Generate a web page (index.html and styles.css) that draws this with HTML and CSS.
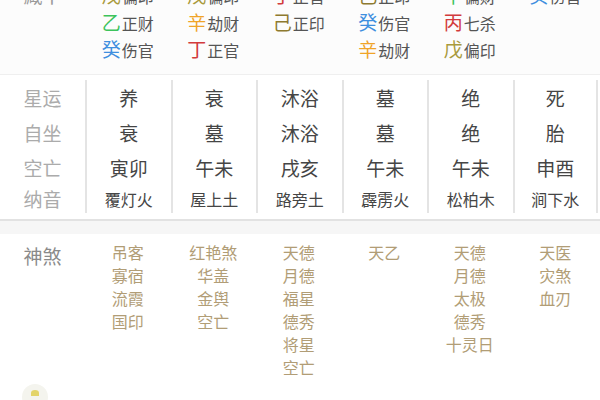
FILE: index.html
```html
<!DOCTYPE html>
<html lang="zh">
<head>
<meta charset="utf-8">
<link rel="stylesheet" href="styles.css">
</head>
<body>
<div class="page">
  <section class="hidden-stems">
    <div class="label">藏干</div>
    <div class="hs-col">
      <div class="hs"><span class="stem earth1">戊</span>偏印</div>
      <div class="hs"><span class="stem wood">乙</span>正财</div>
      <div class="hs"><span class="stem water">癸</span>伤官</div>
    </div>
    <div class="hs-col">
      <div class="hs"><span class="stem earth1">戊</span>偏印</div>
      <div class="hs"><span class="stem metal">辛</span>劫财</div>
      <div class="hs"><span class="stem fire">丁</span>正官</div>
    </div>
    <div class="hs-col">
      <div class="hs"><span class="stem fire">丁</span>正官</div>
      <div class="hs"><span class="stem earth2">己</span>正印</div>
    </div>
    <div class="hs-col">
      <div class="hs"><span class="stem earth2">己</span>正印</div>
      <div class="hs"><span class="stem water">癸</span>伤官</div>
      <div class="hs"><span class="stem metal">辛</span>劫财</div>
    </div>
    <div class="hs-col">
      <div class="hs"><span class="stem wood">甲</span>偏财</div>
      <div class="hs"><span class="stem fire">丙</span>七杀</div>
      <div class="hs"><span class="stem earth1">戊</span>偏印</div>
    </div>
    <div class="hs-col">
      <div class="hs"><span class="stem water">癸</span>伤官</div>
    </div>
  </section>

  <section class="stages">
    <div class="st-col labels">
      <div class="cell">星运</div>
      <div class="cell">自坐</div>
      <div class="cell">空亡</div>
      <div class="cell small">纳音</div>
    </div>
    <div class="st-col">
      <div class="cell">养</div><div class="cell">衰</div><div class="cell">寅卯</div><div class="cell small">覆灯火</div>
    </div>
    <div class="st-col">
      <div class="cell">衰</div><div class="cell">墓</div><div class="cell">午未</div><div class="cell small">屋上土</div>
    </div>
    <div class="st-col">
      <div class="cell">沐浴</div><div class="cell">沐浴</div><div class="cell">戌亥</div><div class="cell small">路旁土</div>
    </div>
    <div class="st-col">
      <div class="cell">墓</div><div class="cell">墓</div><div class="cell">午未</div><div class="cell small">霹雳火</div>
    </div>
    <div class="st-col">
      <div class="cell">绝</div><div class="cell">绝</div><div class="cell">午未</div><div class="cell small">松柏木</div>
    </div>
    <div class="st-col last">
      <div class="cell">死</div><div class="cell">胎</div><div class="cell">申酉</div><div class="cell small">涧下水</div>
    </div>
  </section>

  <div class="band"></div>

  <section class="shensha">
    <div class="ss-label">神煞</div>
    <div class="ss-col"><div>吊客</div><div>寡宿</div><div>流霞</div><div>国印</div></div>
    <div class="ss-col"><div>红艳煞</div><div>华盖</div><div>金舆</div><div>空亡</div></div>
    <div class="ss-col"><div>天德</div><div>月德</div><div>福星</div><div>德秀</div><div>将星</div><div>空亡</div></div>
    <div class="ss-col"><div>天乙</div></div>
    <div class="ss-col"><div>天德</div><div>月德</div><div>太极</div><div>德秀</div><div>十灵日</div></div>
    <div class="ss-col"><div>天医</div><div>灾煞</div><div>血刃</div></div>
  </section>

  <div class="footer">
    <div class="avatar"><span class="dot"></span></div>
  </div>
</div>
</body>
</html>
```

FILE: styles.css
```css
* { box-sizing: border-box; }
html, body {
  margin: 0;
  padding: 0;
  background: #ffffff;
}
body {
  font-family: "Noto Sans CJK SC", "Noto Sans", sans-serif;
  width: 600px;
  height: 400px;
  overflow: hidden;
}
.page {
  width: 600px;
}

/* ---------- hidden stems ---------- */
.hidden-stems {
  display: grid;
  grid-template-columns: 85px repeat(6, 85.5px);
  margin-top: -19px;
  padding-bottom: 12px;
  background: #fcfcfc;
  border-bottom: 1px solid #efefef;
  height: 94px;
}
.hidden-stems .label {
  color: #9a9a9a;
  font-size: 19px;
  line-height: 27px;
  text-align: center;
}
.hs-col {
  display: flex;
  flex-direction: column;
  align-items: center;
}
.hs {
  font-size: 16px;
  line-height: 27px;
  height: 27px;
  color: #555555;
  white-space: nowrap;
}
.stem {
  font-size: 19px;
  margin-right: 1px;
}
.earth1 { color: #a99a3c; }
.earth2 { color: #8e7a30; }
.wood { color: #3dc35c; }
.metal { color: #f0a428; }
.water { color: #3f8fdf; }
.fire { color: #d23b3d; }

/* ---------- stages ---------- */
.stages {
  display: grid;
  grid-template-columns: 85px repeat(6, 85.5px);
  padding: 5px 0 6px;
  background: #ffffff;
}
.st-col {
  display: flex;
  flex-direction: column;
  align-items: center;
  border-left: 2px solid #e4e4e4;
}
.st-col.labels {
  border-left: none;
  color: #ababab;
}
.st-col.labels .cell { color: #ababab; }
.st-col.last {
  border-right: 2px solid #e4e4e4;
}
.cell {
  height: 35px;
  line-height: 35px;
  font-size: 19px;
  color: #454545;
  white-space: nowrap;
}
.cell.small {
  height: 28px;
  line-height: 28px;
  font-size: 16px;
}
.st-col.labels .cell.small { font-size: 19px; }

/* ---------- band ---------- */
.band {
  height: 15px;
  background: #f6f6f6;
  border-top: 2px solid #e2e2e2;
}

/* ---------- shensha ---------- */
.shensha {
  display: grid;
  grid-template-columns: 85px repeat(6, 85.5px);
  padding-top: 7px;
  height: 146px;
}
.ss-label {
  font-size: 19px;
  line-height: 23px;
  margin-top: 3px;
  color: #8a8a8a;
  text-align: center;
}
.ss-col {
  display: flex;
  flex-direction: column;
  align-items: center;
  font-size: 16px;
  line-height: 23px;
  color: #b19d76;
}

/* ---------- footer ---------- */
.footer {
  padding-left: 22px;
  padding-top: 4px;
}
.avatar {
  width: 26px;
  height: 26px;
  border-radius: 50%;
  background: #f4f4ee;
  display: flex;
  justify-content: center;
  padding-top: 6px;
}
.dot {
  width: 8px;
  height: 6px;
  border-radius: 50% 50% 0 0;
  background: #e3d46a;
}
```
